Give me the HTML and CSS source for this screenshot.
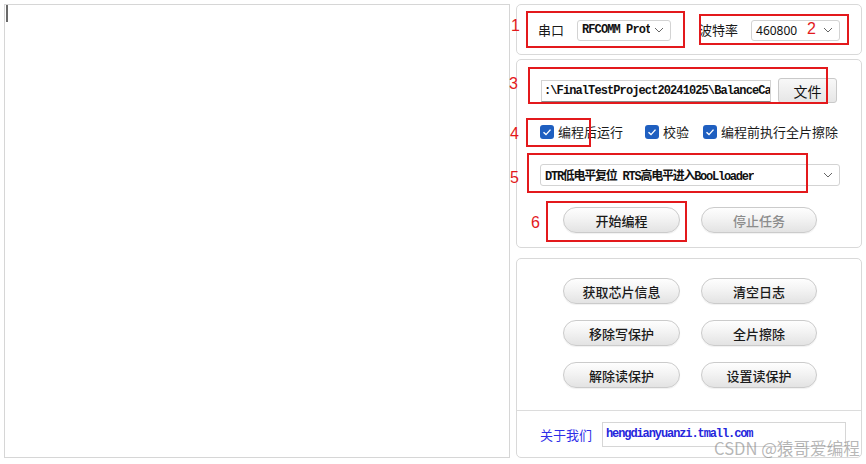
FILE: index.html
```html
<!DOCTYPE html>
<html lang="zh-CN">
<head>
<meta charset="utf-8">
<title>ISP</title>
<link rel="stylesheet" href="styles.css">
</head>
<body>
<div class="log"><span class="caret"></span></div>
<div class="side">
  <div class="box box-port">
    <span class="lbl">串口</span>
    <div class="combo combo-port"><span class="mono">RFCOMM Prot</span><svg class="chev" width="10" height="6" viewBox="0 0 10 6"><polyline points="1,1 5,5 9,1" fill="none" stroke="#666" stroke-width="1"/></svg></div>
    <span class="lbl lbl-baud">波特率</span>
    <div class="combo combo-baud"><span class="num">460800</span><svg class="chev" width="10" height="6" viewBox="0 0 10 6"><polyline points="1,1 5,5 9,1" fill="none" stroke="#666" stroke-width="1"/></svg></div>
  </div>
  <div class="box box-prog">
    <div class="row-file">
      <div class="field mono">:\FinalTestProject20241025\BalanceCa</div>
      <div class="btn-file">文件</div>
    </div>
    <div class="row-checks">
      <label class="chk c1"><svg width="14" height="14" viewBox="0 0 14 14"><rect x="0" y="0" width="14" height="14" rx="3" fill="#1f5fc0"/><polyline points="3.5,7.2 6,9.6 10.5,4.6" fill="none" stroke="#fff" stroke-width="1.4"/></svg><span>编程后运行</span></label>
      <label class="chk c2"><svg width="14" height="14" viewBox="0 0 14 14"><rect x="0" y="0" width="14" height="14" rx="3" fill="#1f5fc0"/><polyline points="3.5,7.2 6,9.6 10.5,4.6" fill="none" stroke="#fff" stroke-width="1.4"/></svg><span>校验</span></label>
      <label class="chk c3"><svg width="14" height="14" viewBox="0 0 14 14"><rect x="0" y="0" width="14" height="14" rx="3" fill="#1f5fc0"/><polyline points="3.5,7.2 6,9.6 10.5,4.6" fill="none" stroke="#fff" stroke-width="1.4"/></svg><span>编程前执行全片擦除</span></label>
    </div>
    <div class="combo combo-reset"><span class="mono">DTR低电平复位 RTS高电平进入BooLloader</span><svg class="chev" width="10" height="6" viewBox="0 0 10 6"><polyline points="1,1 5,5 9,1" fill="none" stroke="#666" stroke-width="1"/></svg></div>
    <div class="row-btns">
      <div class="pill">开始编程</div>
      <div class="pill disabled">停止任务</div>
    </div>
  </div>
  <div class="box box-tools">
    <div class="grid">
      <div class="pill">获取芯片信息</div>
      <div class="pill">清空日志</div>
      <div class="pill">移除写保护</div>
      <div class="pill">全片擦除</div>
      <div class="pill">解除读保护</div>
      <div class="pill">设置读保护</div>
    </div>
    <div class="footer">
      <span class="about">关于我们</span>
      <div class="url mono">hengdianyuanzi.tmall.com</div>
    </div>
  </div>
</div>

<div class="mark n1">1</div>
<div class="mark n2">2</div>
<div class="mark n3">3</div>
<div class="mark n4">4</div>
<div class="mark n5">5</div>
<div class="mark n6">6</div>
<div class="frame f1"></div>
<div class="frame f2"></div>
<div class="frame f3"></div>
<div class="frame f4"></div>
<div class="frame f5"></div>
<div class="frame f6"></div>
<div class="wm">CSDN @猿哥爱编程</div>
</body>
</html>
```
FILE: styles.css
```css
html, body {
  margin: 0;
  background: #ffffff;
}
body {
  padding: 4px;
  display: flex;
  gap: 6px;
  font-family: "Noto Sans CJK SC", "Noto Sans", sans-serif;
  font-size: 13px;
  color: #1a1a1a;
  width: 866px;
  height: 464px;
  box-sizing: border-box;
  overflow: hidden;
}
.log {
  width: 506px;
  height: 454px;
  box-sizing: border-box;
  border: 1px solid #d6d6d6;
  padding: 0 0 0 1px;
}
.caret {
  display: block;
  width: 2px;
  height: 17px;
  background: #6a6a6a;
}
.side {
  width: 346px;
  display: flex;
  flex-direction: column;
}
.box {
  box-sizing: border-box;
  border: 1px solid #d9d9d9;
  border-radius: 5px;
  background: #fff;
}
.mono {
  font-family: "Liberation Mono", "Noto Sans CJK SC", monospace;
  font-size: 12px;
  letter-spacing: -0.9px;
  font-weight: 600;
  color: #111;
  white-space: nowrap;
  overflow: hidden;
}
/* box 1 */
.box-port {
  height: 51px;
  display: flex;
  align-items: center;
  padding-left: 21px;
  padding-top: 1px;
}
.lbl {
  font-size: 13px;
  line-height: 18px;
  color: #1a1a1a;
}
.lbl-baud { margin-left: 28px; }
.combo {
  box-sizing: border-box;
  display: flex;
  align-items: center;
  justify-content: space-between;
  gap: 4px;
  border: 1px solid #d3d3d3;
  border-radius: 3px;
  background: #fff;
  padding: 0 6px 0 4px;
}
.combo-port {
  width: 94px;
  height: 21px;
  margin-left: 13px;
}
.combo-baud {
  width: 89px;
  height: 21px;
  margin-left: 13px;
}
.num {
  font-family: "Noto Sans", sans-serif;
  font-size: 12px;
  color: #111;
}
.chev { flex: none; }
/* box 2 */
.box-prog {
  margin-top: 4px;
  height: 189px;
  padding: 18px 0 0 24px;
  display: flex;
  flex-direction: column;
}
.row-file {
  display: flex;
  align-items: center;
  height: 25px;
}
.field {
  box-sizing: border-box;
  width: 230px;
  height: 22px;
  border: 1px solid #d3d3d3;
  border-bottom-color: #8a8a8a;
  padding: 3px 0 0 2px;
  line-height: 15px;
}
.btn-file {
  margin-left: 7px;
  box-sizing: border-box;
  width: 59px;
  height: 25px;
  border: 1px solid #c9c9c9;
  border-radius: 3px;
  background: linear-gradient(#f8f8f8, #e6e6e6);
  display: flex;
  align-items: center;
  justify-content: center;
  font-size: 14px;
  color: #111;
}
.row-checks {
  display: flex;
  align-items: center;
  height: 18px;
  margin-top: 20px;
}
.chk {
  display: flex;
  align-items: center;
  gap: 4px;
  line-height: 18px;
}
.chk svg { flex: none; }
.c1 { margin-left: -1px; }
.c2 { margin-left: 22px; }
.c3 { margin-left: 14px; }
.combo-reset {
  margin-top: 23px;
  margin-left: -1px;
  width: 300px;
  height: 22px;
  padding-left: 4px;
}
.combo-reset .mono { letter-spacing: -1.25px; }
.row-btns {
  display: flex;
  gap: 21px;
  margin-top: 21px;
  margin-left: 22px;
}
.pill {
  box-sizing: border-box;
  width: 117px;
  height: 26px;
  border: 1px solid #cbcbcb;
  border-radius: 13px;
  background: linear-gradient(#fefefe 0%, #f3f3f3 45%, #e3e3e3 100%);
  display: flex;
  align-items: center;
  justify-content: center;
  font-size: 13px;
  font-weight: 500;
  color: #1a1a1a;
  box-shadow: 0 1px 1px rgba(0,0,0,0.06);
}
.pill + .pill { width: 116px; }
.pill.disabled { color: #8c8c8c; }
/* box 3 */
.box-tools {
  margin-top: 10px;
  height: 200px;
  display: flex;
  flex-direction: column;
}
.grid {
  flex: 1;
  display: grid;
  grid-template-columns: 117px 116px;
  grid-auto-rows: 26px;
  column-gap: 21px;
  row-gap: 16px;
  padding: 19px 0 0 46px;
}
.grid .pill { width: auto; }
.footer {
  height: 46px;
  border-top: 1px solid #dcdcdc;
  display: flex;
  align-items: center;
  padding-left: 23px;
}
.about {
  color: #2f2fe8;
  font-size: 13px;
}
.url {
  margin-left: 10px;
  box-sizing: border-box;
  width: 244px;
  height: 25px;
  border: 1px solid #d6d6d6;
  padding: 4px 0 0 3px;
  line-height: 15px;
  color: #2626dc;
  letter-spacing: -1.1px;
}
/* annotations overlay */
.mark {
  position: absolute;
  font-family: "Liberation Sans", sans-serif;
  font-size: 16px;
  line-height: 16px;
  color: #e3191c;
}
.n1 { left: 511px; top: 18px; }
.n2 { left: 807px; top: 21px; }
.n3 { left: 509px; top: 76px; }
.n4 { left: 510px; top: 126px; }
.n5 { left: 510px; top: 170px; }
.n6 { left: 531px; top: 215px; }
.frame {
  position: absolute;
  box-sizing: border-box;
  border: 2px solid #e3191c;
}
.f1 { left: 526px; top: 11px; width: 159px; height: 37px; }
.f2 { left: 699px; top: 14px; width: 150px; height: 31px; }
.f3 { left: 528px; top: 67px; width: 300px; height: 37px; }
.f4 { left: 526px; top: 118px; width: 65px; height: 29px; }
.f5 { left: 527px; top: 153px; width: 281px; height: 40px; }
.f6 { left: 546px; top: 201px; width: 141px; height: 41px; }
.wm {
  position: absolute;
  left: 714px;
  top: 438px;
  font-family: "Noto Sans CJK SC", sans-serif;
  font-size: 16.6px;
  line-height: 20px;
  color: rgba(120,120,120,0.55);
  white-space: nowrap;
}
```
